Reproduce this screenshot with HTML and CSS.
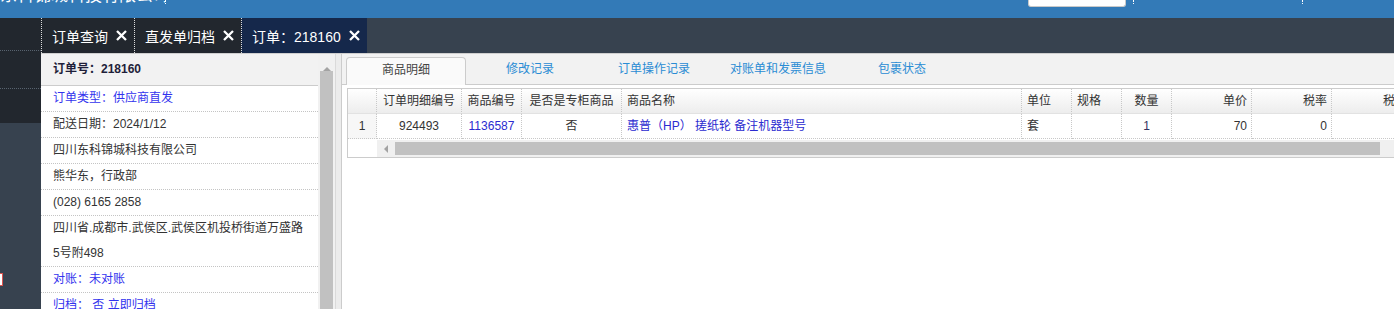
FILE: index.html
```html
<!DOCTYPE html>
<html lang="zh-CN">
<head>
  <meta charset="UTF-8">
  <meta name="viewport" content="width=device-width, initial-scale=1.0">
  <title>订单：218160</title>
  <link rel="stylesheet" href="styles.css">
</head>
<body>
  <div class="topbar">
    <div class="brand">东科锦城科技有限公司 ▾</div>
    <div class="top-fill"></div>
    <div class="search"></div>
    <div class="top-item"></div>
    <div class="top-item last"></div>
  </div>

  <div class="layout">
    <div class="sidebar">
      <div class="side-item first"></div>
      <div class="side-item second"></div>
      <div class="side-item third"></div>
      <div class="side-badge"></div>
    </div>

    <div class="main">
      <div class="tabbar">
        <div class="tab">订单查询 <svg class="close" viewBox="0 0 13 13"><path d="M2 2 L11 11 M11 2 L2 11"/></svg></div>
        <div class="tab">直发单归档 <svg class="close" viewBox="0 0 13 13"><path d="M2 2 L11 11 M11 2 L2 11"/></svg></div>
        <div class="tab active">订单：218160 <svg class="close" viewBox="0 0 13 13"><path d="M2 2 L11 11 M11 2 L2 11"/></svg></div>
      </div>

      <div class="content">
        <div class="info-panel">
          <div class="info-head">订单号：218160</div>
          <div class="info-row blue">订单类型：供应商直发</div>
          <div class="info-row">配送日期：2024/1/12</div>
          <div class="info-row">四川东科锦城科技有限公司</div>
          <div class="info-row">熊华东，行政部</div>
          <div class="info-row">(028) 6165 2858</div>
          <div class="info-row">四川省.成都市.武侯区.武侯区机投桥街道万盛路5号附498</div>
          <div class="info-row blue">对账：未对账</div>
          <div class="info-row blue">归档： 否 立即归档</div>
        </div>
        <div class="vscroll">
          <div class="arrow-up"></div>
          <div class="thumb"></div>
        </div>
        <div class="splitter"></div>

        <div class="detail">
          <div class="detail-tabs">
            <div class="dtab active">商品明细</div>
            <div class="dtab">修改记录</div>
            <div class="dtab">订单操作记录</div>
            <div class="dtab">对账单和发票信息</div>
            <div class="dtab">包裹状态</div>
          </div>

          <div class="grid">
            <table>
              <colgroup>
                <col style="width: 29px">
                <col style="width: 85px">
                <col style="width: 60px">
                <col style="width: 100px">
                <col style="width: 400px">
                <col style="width: 50px">
                <col style="width: 50px">
                <col style="width: 50px">
                <col style="width: 80px">
                <col style="width: 80px">
                <col style="width: 80px">
              </colgroup>
              <thead>
                <tr>
                  <th class="num"></th>
                  <th>订单明细编号</th>
                  <th>商品编号</th>
                  <th>是否是专柜商品</th>
                  <th class="left">商品名称</th>
                  <th class="left">单位</th>
                  <th class="left">规格</th>
                  <th>数量</th>
                  <th class="right">单价</th>
                  <th class="right">税率</th>
                  <th class="right">税额</th>
                </tr>
              </thead>
              <tbody>
                <tr>
                  <td class="num">1</td>
                  <td>924493</td>
                  <td class="link">1136587</td>
                  <td>否</td>
                  <td class="left link">惠普（HP） 搓纸轮 备注机器型号</td>
                  <td class="left">套</td>
                  <td class="left"></td>
                  <td class="qty">1</td>
                  <td class="right">70</td>
                  <td class="right">0</td>
                  <td class="right"></td>
                </tr>
              </tbody>
            </table>
            <div class="hscroll">
              <div class="spacer"></div>
              <div class="track">
                <div class="arrow-left"></div>
                <div class="thumb"></div>
              </div>
            </div>
          </div>
        </div>
      </div>
    </div>
  </div>
</body>
</html>
```

FILE: styles.css
```css
html, body {
  height: 100%;
}

body {
  margin: 0;
  font-family: "Liberation Sans", "Noto Sans CJK SC", sans-serif;
  font-size: 12px;
  color: #333;
  display: flex;
  flex-direction: column;
  overflow: hidden;
}

/* top header */
.topbar {
  height: 18px;
  flex-shrink: 0;
  background: #337ab7;
  color: #fff;
  display: flex;
  align-items: flex-start;
  overflow: hidden;
}

.brand {
  width: 165px;
  flex-shrink: 0;
  font-size: 17px;
  line-height: 20px;
  margin-top: -14px;
  white-space: nowrap;
  overflow: hidden;
}

.top-fill {
  width: 863px;
  height: 4px;
  border-left: 1px dotted #fff;
  box-sizing: border-box;
}

.search {
  width: 98px;
  height: 7px;
  background: #fff;
  border: 1px solid #c9c9c9;
  border-top: none;
  border-radius: 0 0 3px 3px;
  box-sizing: border-box;
  margin-right: 7px;
}

.top-item {
  width: 169px;
  height: 4px;
  border-left: 1px dotted #fff;
  box-sizing: border-box;
}

.top-item.last {
  flex: 1;
}

.layout {
  flex: 1;
  display: flex;
  min-height: 0;
}

/* left nav */
.sidebar {
  width: 41px;
  flex-shrink: 0;
  background: #37424f;
}

.side-item {
  background: #22272e;
  border-bottom: 1px dotted #58636f;
}

.side-item.first { height: 32px; }
.side-item.second { height: 37px; }
.side-item.third { height: 34px; border-bottom: none; }

.side-badge {
  margin-top: 150px;
  width: 2px;
  height: 11px;
  background: #fff;
  border: 1px solid #d9534f;
  border-left: none;
}

.main {
  flex: 1;
  min-width: 0;
  display: flex;
  flex-direction: column;
}

/* page tabs */
.tabbar {
  height: 35px;
  flex-shrink: 0;
  background: #37424f;
  display: flex;
}

.tab {
  display: flex;
  align-items: center;
  gap: 7px;
  padding: 0 6px 0 10px;
  background: #22272e;
  border-left: 1px dotted #ddd;
  color: #fff;
  font-size: 14px;
  white-space: nowrap;
}

.tab.active {
  background: #15284b;
}

.close {
  width: 13px;
  height: 13px;
  fill: none;
  stroke: #fff;
  stroke-width: 2.3;
}

.content {
  flex: 1;
  min-height: 0;
  display: flex;
  border-top: 1px solid #cfcfcf;
  background: #fff;
}

/* order info */
.info-panel {
  width: 277px;
  flex-shrink: 0;
  overflow: hidden;
}

.info-head {
  height: 31px;
  line-height: 31px;
  padding-left: 12px;
  background: #f2f2f2;
  border-bottom: 1px solid #ccc;
  font-weight: bold;
  color: #1f1f3a;
}

.info-row {
  line-height: 25px;
  padding: 0 15px 0 12px;
  border-bottom: 1px dotted #c4c4c4;
}

.blue {
  color: #3333ee;
}

.vscroll {
  width: 17px;
  flex-shrink: 0;
  background: #f1f1f1;
  display: flex;
  flex-direction: column;
  align-items: center;
}

.arrow-up {
  height: 17px;
  width: 0;
  box-sizing: border-box;
  border-left: 4px solid transparent;
  border-right: 4px solid transparent;
  border-bottom: 4px solid #a3a3a3;
  border-top: 6px solid transparent;
}

.vscroll .thumb {
  flex: 1;
  width: 13px;
  background: #c1c1c1;
}

.splitter {
  width: 5px;
  flex-shrink: 0;
  background: #ececec;
  border-left: 1px solid #dadada;
  border-right: 1px solid #ccc;
}

/* detail area */
.detail {
  flex: 1;
  min-width: 0;
  overflow: hidden;
}

.detail-tabs {
  height: 30px;
  background: #f2f2f2;
  border-bottom: 1px solid #ccc;
  display: flex;
  align-items: flex-end;
  gap: 4px;
  padding-left: 4px;
}

.dtab {
  width: 120px;
  height: 28px;
  margin-bottom: -1px;
  line-height: 25px;
  text-align: center;
  color: #2a8cd4;
  box-sizing: border-box;
  flex-shrink: 0;
}

.dtab.active {
  background: #fafafa;
  border: 1px solid #ccc;
  border-bottom: none;
  border-radius: 4px 4px 0 0;
  color: #444;
}

.grid {
  margin: 3px 0 0 5px;
  border: 1px solid #ccc;
  border-right: none;
  overflow: hidden;
}

.grid table {
  table-layout: fixed;
  width: 1064px;
  border-collapse: separate;
  border-spacing: 0;
}

.grid th,
.grid td {
  line-height: 24px;
  padding: 0 4px;
  border-right: 1px dotted #c8c8c8;
  text-align: center;
  white-space: nowrap;
  overflow: hidden;
  font-weight: normal;
}

.grid th {
  background: linear-gradient(#fff, #ededed);
  border-bottom: 1px solid #e2e2e2;
}

.grid td {
  border-bottom: 1px dotted #c8c8c8;
}

.grid .left { text-align: left; padding-left: 5px; }
.grid .right { text-align: right; }
.grid td.num { background: #f7f7f7; }
.grid .link { color: #2b2bd0; }
.grid .qty { color: #33335f; }

.hscroll {
  display: flex;
  height: 17px;
  margin-top: 1px;
}

.hscroll .spacer {
  width: 29px;
  background: #fff;
}

.hscroll .track {
  flex: 1;
  display: flex;
  background: #f0f0f0;
}

.arrow-left {
  width: 18px;
  display: flex;
  align-items: center;
  justify-content: center;
}

.arrow-left::before {
  content: "";
  border-top: 4px solid transparent;
  border-bottom: 4px solid transparent;
  border-right: 4px solid #a3a3a3;
}

.hscroll .thumb {
  flex: 1;
  height: 13px;
  margin: 2px 14px 0 0;
  background: #c1c1c1;
}
```
